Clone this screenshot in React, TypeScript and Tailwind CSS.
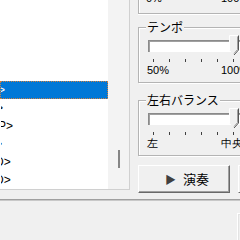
import React from 'react';

interface Row {
  text: string;
  shift: number;
  selected?: boolean;
}

// list is scrolled horizontally, only the tail of each name is visible
const rows: Row[] = [
  { text: '', shift: 0 },
  { text: '', shift: 0 },
  { text: '', shift: 0 },
  { text: '', shift: 0 },
  { text: '>', shift: 3, selected: true },
  { text: '>', shift: 5 },
  { text: 'P>', shift: 3 },
  { text: '>', shift: 6 },
  { text: 'D>', shift: 6 },
  { text: 'D>', shift: 6 },
];

const ticks = [0, 1, 2, 3, 4, 5];

function Thumb() {
  return (
    <svg width="11" height="21" viewBox="0 0 11 21" className="absolute left-[80px] top-[-6px]">
      <polygon points="0.5,0.5 9.5,0.5 9.5,15 5,20 0.5,15" fill="#f0f0f0" />
      <polyline points="0.5,15 0.5,0.5 9.5,0.5" fill="none" stroke="#ffffff" />
      <polyline points="9.5,0.5 9.5,15 5,20" fill="none" stroke="#555555" />
      <polyline points="8.5,1.5 8.5,14.5 5,18.5" fill="none" stroke="#a0a0a0" />
    </svg>
  );
}

function SliderGroup({ title, left, right }: { title: string; left: string; right: string }) {
  return (
    <div className="h-[56px] border border-[#b4b4b4] shadow-[inset_1px_1px_0_#ffffff,1px_1px_0_#ffffff]">
      <div className="mt-[-8px] ml-[7px] w-fit px-[1px] bg-[#f0f0f0] text-[12px] leading-[14px]">{title}</div>
      <div className="relative mt-[6px] ml-[9px] w-[110px] h-[12px] bg-white border-t border-l border-[#8a8a8a] shadow-[inset_1px_1px_0_#a0a0a0]">
        <Thumb />
      </div>
      <div className="mt-[7px] ml-[14px] flex gap-[15px]">
        {ticks.map((t) => (
          <div key={t} className="w-[1px] h-[3px] bg-[#404040]" />
        ))}
      </div>
      <div className="mt-[2px] ml-[8px] flex text-[11px] leading-[12px] font-['Liberation_Sans',sans-serif]">
        <span className="w-[74px]">{left}</span>
        <span>{right}</span>
      </div>
    </div>
  );
}

export default function App() {
  return (
    <div className="w-[240px] h-[240px] overflow-hidden bg-[#f0f0f0] text-black font-['Noto_Sans_CJK_JP',sans-serif]">
      <div className="h-[199px] flex">
        {/* file list */}
        <div className="w-[130px] h-[190px] shrink-0 flex border-r border-b border-[#d0d0d0]">
          <div className="w-[108px] h-full bg-white overflow-hidden">
            <div className="mt-[9px]">
              {rows.map((row, i) => (
                <div
                  key={i}
                  className={`h-[18px] text-[12px] leading-[16px] font-['Liberation_Sans',sans-serif] whitespace-nowrap overflow-hidden ${
                    row.selected ? 'bg-[#0078d7] text-white border border-dotted border-[#d08040]' : 'border border-transparent'
                  }`}
                >
                  <span className="block" style={{ marginLeft: -row.shift }}>
                    {row.text}
                  </span>
                </div>
              ))}
            </div>
          </div>
          <div className="flex-1 bg-[#f3f3f3] pt-[150px] pl-[10px]">
            <div className="w-[2px] h-[18px] bg-[#858585]" />
          </div>
        </div>

        {/* settings */}
        <div className="ml-[8px] w-[130px] shrink-0 flex flex-col">
          <div className="h-[14px] border-l border-r border-b border-[#b4b4b4] shadow-[inset_1px_0_0_#ffffff,0_1px_0_#ffffff]">
            <div className="mt-[-8px] ml-[7px] flex text-[11px] leading-[12px] font-['Liberation_Sans',sans-serif]">
              <span className="w-[75px]">0%</span>
              <span>100%</span>
            </div>
          </div>
          <div className="mt-[13px]">
            <SliderGroup title="テンポ" left="50%" right="100%" />
          </div>
          <div className="mt-[17px]">
            <SliderGroup title="左右バランス" left="左" right="中央" />
          </div>
          <div className="mt-[9px] flex gap-[8px]">
            <button className="w-[92px] h-[28px] shrink-0 flex items-center justify-center gap-[7px] pl-[6px] bg-[#f0f0f0] border border-t-white border-l-white border-r-[#696969] border-b-[#696969] shadow-[inset_-1px_-1px_0_#a0a0a0]">
              <span className="text-[11px] leading-[12px] text-[#404040]">▶</span>
              <span className="text-[13px] leading-[16px]">演奏</span>
            </button>
            <button className="w-[92px] h-[28px] shrink-0 bg-[#f0f0f0] border border-t-white border-l-white border-r-[#696969] border-b-[#696969]" />
          </div>
        </div>
      </div>

      {/* status separator */}
      <div className="h-[1px] bg-[#a0a0a0]" />
      <div className="h-[1px] bg-[#c8c8c8]" />
      <div className="ml-[237px] mt-[12px] w-[60px] h-[30px] border-t border-l border-white shadow-[inset_1px_1px_0_#e3e3e3]" />
    </div>
  );
}
